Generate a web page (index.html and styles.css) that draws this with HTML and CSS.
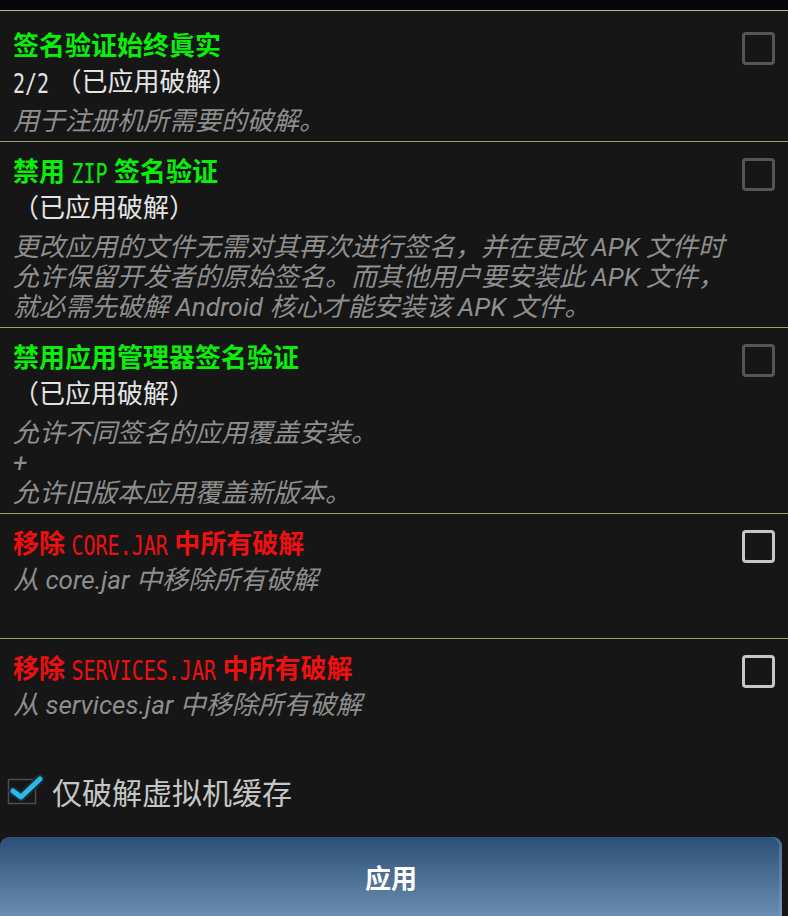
FILE: index.html
```html
<!DOCTYPE html>
<html lang="zh-CN">
<head>
<meta charset="utf-8">
<title>补丁</title>
<link rel="stylesheet" href="styles.css">
</head>
<body>
<div class="topbar"></div>
<div class="list">
  <div class="item first">
    <div class="text">
      <div class="title green">签名验证始终眞实</div>
      <div class="sub"><span class="digi">2/2</span> （已应用破解）</div>
      <div class="desc"><div class="ln">用于注册机所需要的破解。</div></div>
    </div>
    <span class="box"></span>
  </div>
  <div class="item">
    <div class="text">
      <div class="title green">禁用 <span class="digi">ZIP</span> 签名验证</div>
      <div class="sub">（已应用破解）</div>
      <div class="desc">
        <div class="ln">更改应用的文件无需对其再次进行签名，并在更改 APK 文件时</div>
        <div class="ln">允许保留开发者的原始签名。而其他用户要安装此 APK 文件，</div>
        <div class="ln">就必需先破解 Android 核心才能安装该 APK 文件。</div>
      </div>
    </div>
    <span class="box"></span>
  </div>
  <div class="item">
    <div class="text">
      <div class="title green">禁用应用管理器签名验证</div>
      <div class="sub">（已应用破解）</div>
      <div class="desc">
        <div class="ln">允许不同签名的应用覆盖安装。</div>
        <div class="ln">+</div>
        <div class="ln">允许旧版本应用覆盖新版本。</div>
      </div>
    </div>
    <span class="box"></span>
  </div>
  <div class="item tall">
    <div class="text">
      <div class="title red">移除 <span class="digi">CORE.JAR</span> 中所有破解</div>
      <div class="desc near"><div class="ln">从 core.jar 中移除所有破解</div></div>
    </div>
    <span class="box on"></span>
  </div>
  <div class="item tall last">
    <div class="text">
      <div class="title red">移除 <span class="digi">SERVICES.JAR</span> 中所有破解</div>
      <div class="desc near"><div class="ln">从 services.jar 中移除所有破解</div></div>
    </div>
    <span class="box on"></span>
  </div>
</div>
<div class="checkrow">
  <svg class="check" width="44" height="34" viewBox="0 0 44 34">
    <rect x="2.5" y="5.5" width="27" height="24" fill="none" stroke="#4e4e4e" stroke-width="1.5"/>
    <polyline points="7,17 15,23 34,5" fill="none" stroke="#0c3440" stroke-width="9" stroke-linecap="round" stroke-linejoin="round"/>
    <polyline points="7,17 15,23 34,5" fill="none" stroke="#33b5e5" stroke-width="5" stroke-linecap="round" stroke-linejoin="round"/>
  </svg>
  <span class="checklabel">仅破解虚拟机缓存</span>
</div>
<div class="apply">应用</div>
</body>
</html>
```

FILE: styles.css
```css
html, body {
  margin: 0;
  padding: 0;
}
body {
  width: 788px;
  height: 916px;
  overflow: hidden;
  background: #161616;
  font-family: Roboto, "Noto Sans CJK SC", sans-serif;
}
.topbar {
  height: 10px;
  background: #06060c;
  border-bottom: 1px solid #bdb99c;
}
.item {
  display: flex;
  align-items: flex-start;
  padding: 13px 0 5px 13px;
  border-bottom: 1px solid #a29d76;
}
.item.first {
  padding-top: 18px;
}
.item.tall {
  min-height: 125px;
  box-sizing: border-box;
}
.item.last {
  border-bottom: none;
}
.text {
  flex: 1;
  min-width: 0;
  white-space: nowrap;
}
.title {
  height: 34px;
  font-size: 26px;
  line-height: 34px;
  font-weight: bold;
}
.green { color: #0aee0a; }
.red { color: #ee1010; }
.digi {
  display: inline-block;
  font-family: "DejaVu Sans Mono", monospace;
  font-weight: normal;
  font-size: 20px;
  line-height: 20px;
  transform: scaleY(1.3);
}
.sub {
  height: 34px;
  margin-top: 2px;
  font-size: 26px;
  line-height: 34px;
  color: #e4e4e4;
}
.desc {
  margin-top: 7px;
  font-size: 26px;
  font-style: italic;
  color: #8e8e8e;
}
.desc.near {
  margin-top: 4px;
}
.ln {
  height: 30px;
  line-height: 30px;
}
.box {
  flex: none;
  width: 27px;
  height: 27px;
  margin: 3px 13px 0 16px;
  border: 3px solid #555;
  border-radius: 4px;
}
.box.on {
  border-color: #c6c6c6;
}
.checkrow {
  display: flex;
  align-items: center;
  height: 46px;
  margin-top: 7px;
  padding-left: 6px;
}
.check {
  flex: none;
  margin-top: -6px;
}
.checklabel {
  margin-left: 2px;
  font-size: 30px;
  line-height: 40px;
  color: #c6c6c6;
}
.apply {
  margin-top: 20px;
  margin-right: 6px;
  height: 90px;
  box-sizing: border-box;
  padding-top: 25px;
  border-radius: 9px 9px 0 0;
  background: linear-gradient(#2c4f75 0, #6a8cb0 78px);
  box-shadow: inset -3px 0 0 rgba(130, 165, 210, 0.35);
  text-align: center;
  color: #ffffff;
  font-size: 26px;
  line-height: 34px;
  font-weight: bold;
}
```
